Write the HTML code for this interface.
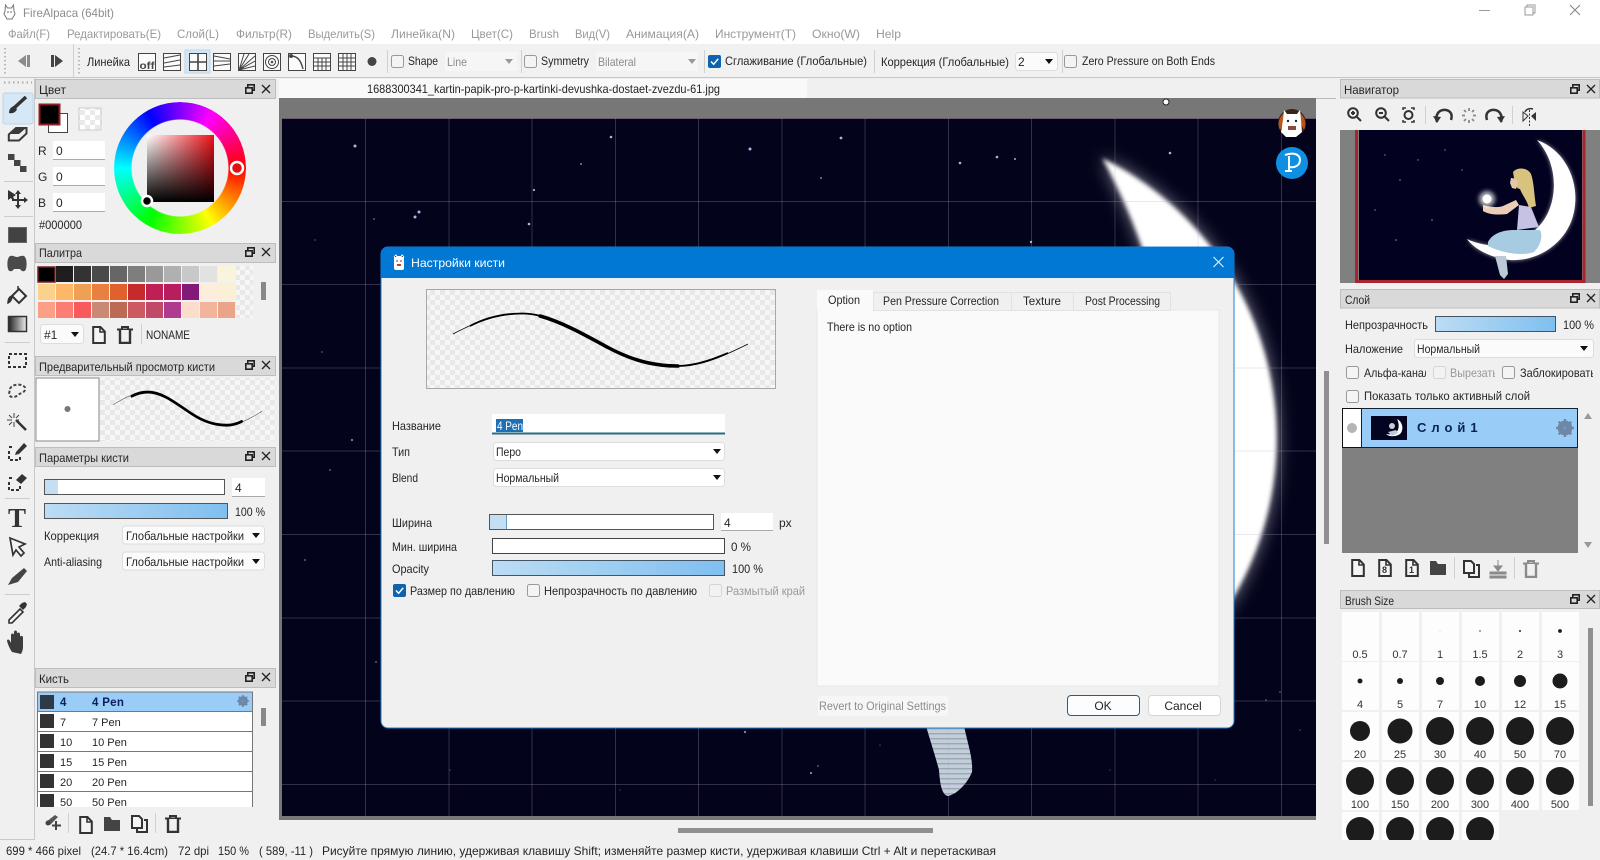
<!DOCTYPE html>
<html><head><meta charset="utf-8"><title>FireAlpaca</title>
<style>
html,body{margin:0;padding:0;background:#f0f0f0;width:1600px;height:860px;overflow:hidden}
svg{display:block}
text{font-family:"Liberation Sans","Noto Sans CJK SC",sans-serif;font-size:12px;fill:#252525}
.g{fill:#8c8c8c}.m{fill:#999}.w{fill:#fff}
.b{font-weight:bold;fill:#0a1f5c}
.l{font-size:11px;text-anchor:middle;fill:#333}
.h{fill:#d9d9d9;stroke:#bdbdbd}
.sep{stroke:#d0d0d0;stroke-width:1}
.row{fill:#fff;stroke:#777}
</style></head><body>
<svg width="1600" height="860" viewBox="0 0 1600 860" xmlns="http://www.w3.org/2000/svg">
<defs>
<pattern id="ck" width="10" height="10" patternUnits="userSpaceOnUse"><rect width="10" height="10" fill="#fff"/><rect width="5" height="5" fill="#e9e9e9"/><rect x="5" y="5" width="5" height="5" fill="#e9e9e9"/></pattern>
<pattern id="ckl" width="10" height="10" patternUnits="userSpaceOnUse"><rect width="10" height="10" fill="#f6f6f6"/><rect width="5" height="5" fill="#e8e8e8"/><rect x="5" y="5" width="5" height="5" fill="#e8e8e8"/></pattern>
<pattern id="legs" width="10" height="5" patternUnits="userSpaceOnUse"><rect width="10" height="5" fill="#c4ced8"/><rect y="3" width="10" height="1.4" fill="#98a8b6"/></pattern>
<linearGradient id="blue" x1="0" x2="1" y1="0" y2="0"><stop offset="0" stop-color="#bcdcf4"/><stop offset="1" stop-color="#7fbff0"/></linearGradient>
<linearGradient id="gr" x1="0" x2="1"><stop offset="0" stop-color="#222"/><stop offset="1" stop-color="#eee"/></linearGradient>
<linearGradient id="sqh" x1="0" x2="1"><stop offset="0" stop-color="#fff"/><stop offset="1" stop-color="#f01018"/></linearGradient>
<linearGradient id="sqv" x1="0" x2="0" y1="0" y2="1"><stop offset="0" stop-color="#000" stop-opacity="0"/><stop offset="1" stop-color="#000"/></linearGradient>
<filter id="bl" x="-20%" y="-20%" width="140%" height="140%"><feGaussianBlur stdDeviation="9"/></filter>
<filter id="bs" x="-30%" y="-30%" width="160%" height="160%"><feGaussianBlur stdDeviation="2"/></filter>
<symbol id="cb" viewBox="0 0 13 13" width="13" height="13"><rect x=".5" y=".5" width="12" height="12" rx="2" fill="#f4f4f4" stroke="#999"/></symbol>
<symbol id="cbd" viewBox="0 0 13 13" width="13" height="13"><rect x=".5" y=".5" width="12" height="12" rx="2" fill="#f2f2f2" stroke="#d5d5d5"/></symbol>
<symbol id="cbc" viewBox="0 0 13 13" width="13" height="13"><rect width="13" height="13" rx="2" fill="#0f62ae"/><path d="M3 6.5l2.6 2.8L10.2 3.8" fill="none" stroke="#fff" stroke-width="1.5"/></symbol>
<symbol id="win" viewBox="0 0 10 10" width="10" height="10"><rect x="2.8" y=".8" width="6.4" height="5.4" fill="none" stroke="#222" stroke-width="1.6"/><rect x=".8" y="3.8" width="6.4" height="5.4" fill="#d9d9d9" stroke="#222" stroke-width="1.6"/></symbol>
<symbol id="x" viewBox="0 0 10 10" width="10" height="10"><path d="M1 1l8 8M9 1L1 9" stroke="#222" stroke-width="1.3"/></symbol>
<symbol id="doc" viewBox="0 0 14 18" width="14" height="18"><path d="M1.2 1h7.3l4.3 4.5V17H1.2z" fill="#f4f4f4" stroke="#333" stroke-width="2"/><path d="M8 1v5h5" fill="none" stroke="#333" stroke-width="1.6"/></symbol>
<symbol id="fold" viewBox="0 0 16 14" width="16" height="14"><path d="M0 0h6l2 3h8v11H0z" fill="#444"/></symbol>
<symbol id="copy" viewBox="0 0 17 18" width="17" height="18"><path d="M1 1h7l3 3v9H1z" fill="#f4f4f4" stroke="#333" stroke-width="2"/><path d="M13 5h3v12H6v-3" fill="none" stroke="#333" stroke-width="2"/></symbol>
<symbol id="trash" viewBox="0 0 16 18" width="16" height="18"><path d="M0 3.5h16M5 3V1h6v2" fill="none" stroke="#333" stroke-width="2"/><path d="M3 4v13h10V4" fill="#f0f0f0" stroke="#333" stroke-width="2.4"/></symbol>
<symbol id="trg" viewBox="0 0 16 18" width="16" height="18"><path d="M0 3.5h16M5 3V1h6v2" fill="none" stroke="#8a8a8a" stroke-width="2"/><path d="M3 4v13h10V4" fill="#f0f0f0" stroke="#8a8a8a" stroke-width="2.4"/></symbol>
<symbol id="gear" viewBox="0 0 20 20" width="20" height="20"><circle cx="10" cy="10" r="6" fill="none" stroke="#6f87a6" stroke-width="4.4"/><path d="M10 0v20M0 10h20M3 3l14 14M17 3L3 17" stroke="#6f87a6" stroke-width="2.6"/><circle cx="10" cy="10" r="1.6" fill="#7f9ab8"/></symbol>
<path id="stroke" fill="none" d="M453,334 C477,321 500,313.500 522,313.500 C552,313.500 580,333 608,347.500 C636,362.500 658,366 678,366 C702,366 726,355 748,344"/>
<clipPath id="canv"><rect x="282" y="118" width="1034" height="698"/></clipPath>
<clipPath id="nav"><rect x="1359" y="130" width="223" height="150"/></clipPath>
<clipPath id="c1"><rect x="1364" y="365" width="62" height="16"/></clipPath>
<clipPath id="c2"><rect x="1450" y="365" width="45" height="16"/></clipPath>
<clipPath id="c3"><rect x="1520" y="365" width="73" height="16"/></clipPath>
<clipPath id="sz"><rect x="1340" y="610" width="245" height="230"/></clipPath>
<clipPath id="lst"><rect x="36" y="690" width="218" height="117"/></clipPath>
</defs>

<rect width="1600" height="860" fill="#f0f0f0"/>
<!-- Title + menu -->
<rect width="1600" height="44" fill="#fff"/>
<path d="M5.500 5l2 3h4l2-3 .5 6 1 3-3 5H7l-3-5 1-3z" fill="#fff" stroke="#777"/><circle cx="8" cy="12" r=".8" fill="#555"/><circle cx="11" cy="12" r=".8" fill="#555"/>
<text x="23" y="17" class="g" textLength="91" lengthAdjust="spacingAndGlyphs">FireAlpaca (64bit)</text>
<text x="8" y="38" class="m" textLength="42" lengthAdjust="spacingAndGlyphs">Файл(F)</text>
<text x="67" y="38" class="m" textLength="94" lengthAdjust="spacingAndGlyphs">Редактировать(E)</text>
<text x="177" y="38" class="m" textLength="42" lengthAdjust="spacingAndGlyphs">Слой(L)</text>
<text x="236" y="38" class="m" textLength="56" lengthAdjust="spacingAndGlyphs">Фильтр(R)</text>
<text x="308" y="38" class="m" textLength="67" lengthAdjust="spacingAndGlyphs">Выделить(S)</text>
<text x="391" y="38" class="m" textLength="64" lengthAdjust="spacingAndGlyphs">Линейка(N)</text>
<text x="471" y="38" class="m" textLength="42" lengthAdjust="spacingAndGlyphs">Цвет(C)</text>
<text x="529" y="38" class="m" textLength="30" lengthAdjust="spacingAndGlyphs">Brush</text>
<text x="575" y="38" class="m" textLength="35" lengthAdjust="spacingAndGlyphs">Вид(V)</text>
<text x="626" y="38" class="m" textLength="73" lengthAdjust="spacingAndGlyphs">Анимация(A)</text>
<text x="715" y="38" class="m" textLength="81" lengthAdjust="spacingAndGlyphs">Инструмент(T)</text>
<text x="812" y="38" class="m" textLength="48" lengthAdjust="spacingAndGlyphs">Окно(W)</text>
<text x="876" y="38" class="m" textLength="25" lengthAdjust="spacingAndGlyphs">Help</text>
<path d="M1479 10.500h11" stroke="#999"/>
<rect x="1525" y="7" width="8" height="8" fill="none" stroke="#999"/><path d="M1527 7V5h8v8h-2" fill="none" stroke="#999"/>
<path d="M1570 5l10 10M1580 5l-10 10" stroke="#888" stroke-width="1.1"/>

<!-- Toolbar -->
<rect y="44" width="1600" height="33" fill="#f1f1f1"/><path d="M0 77.500h1600" stroke="#c6c6c6"/>
<path d="M5 48v28M79 48v28" stroke="#bbb" stroke-width="2" stroke-dasharray="1.500 2.500"/>
<path d="M73.500 44v33" class="sep"/>
<path d="M18 61l8-6v12z M27 55h3v12h-3z" fill="#8b8b8b"/>
<path d="M51 55h3v12h-3z M55 55l8 6-8 6z" fill="#444"/>
<text x="87" y="66" textLength="43" lengthAdjust="spacingAndGlyphs">Линейка</text>
<rect x="185" y="50" width="25" height="23" fill="#d4e6f5" stroke="#bcd8ee"/>
<g fill="#fbfbfb" stroke="#444" stroke-width="1">
<rect x="138.500" y="53.500" width="17" height="17"/><rect x="163.500" y="53.500" width="17" height="17"/><rect x="189.500" y="53.500" width="17" height="17"/><rect x="213.500" y="53.500" width="17" height="17"/><rect x="238.500" y="53.500" width="17" height="17"/><rect x="263.500" y="53.500" width="17" height="17"/><rect x="288.500" y="53.500" width="17" height="17"/><rect x="313.500" y="53.500" width="17" height="17"/><rect x="338.500" y="53.500" width="17" height="17"/>
</g>
<text x="139.500" y="69" style="font-size:10px;font-weight:bold;fill:#444" textLength="15" lengthAdjust="spacingAndGlyphs">off</text>
<g stroke="#444" fill="none">
<path d="M164 58l16-3M164 63l16-3M164 67l16-2"/>
<path d="M198 54v16M190 62h16" stroke-width="1.6"/>
<path d="M214 56l16 3M214 61h16M214 66l16-2"/>
<path d="M239 70l16-14M239 70l16-9M239 70l16-4M239 70l10-16M239 70l5-16"/>
<circle cx="272" cy="62" r="6.500"/><circle cx="272" cy="62" r="3.500"/><circle cx="272" cy="62" r=".8"/>
<path d="M291 56c7 0 10 5 12 13" stroke-width="1.400"/><circle cx="291" cy="56" r="1.500" fill="#444"/>
<path d="M314 58h16M314 62h16M314 66h16M318 58v12M322 58v12M326 58v12"/>
<path d="M339 58h16M339 62h16M339 66h16M343 54v16M347 54v16M351 54v16"/>
</g>
<circle cx="372" cy="61.500" r="4.500" fill="#444"/>
<path d="M387.500 50v23M521.500 50v23M704.500 50v23M874.500 50v23M1062.500 50v23" class="sep"/>
<use href="#cb" x="391" y="55"/><text x="408" y="65" textLength="30" lengthAdjust="spacingAndGlyphs">Shape</text>
<rect x="445" y="52" width="72" height="19" fill="#f6f6f6"/><text x="447" y="66" class="g" textLength="20" lengthAdjust="spacingAndGlyphs">Line</text><path d="M505 59h8l-4 5z" fill="#999"/>
<use href="#cb" x="524" y="55"/><text x="541" y="65" textLength="48" lengthAdjust="spacingAndGlyphs">Symmetry</text>
<rect x="596" y="52" width="102" height="19" fill="#f6f6f6"/><text x="598" y="66" class="g" textLength="38" lengthAdjust="spacingAndGlyphs">Bilateral</text><path d="M688 59h8l-4 5z" fill="#999"/>
<use href="#cbc" x="708" y="55"/><text x="725" y="65" textLength="142" lengthAdjust="spacingAndGlyphs">Сглаживание (Глобальные)</text>
<text x="881" y="66" textLength="128" lengthAdjust="spacingAndGlyphs">Коррекция (Глобальные)</text>
<rect x="1015.500" y="52.500" width="42" height="18" rx="3" fill="#fbfbfb" stroke="#ddd"/><text x="1018" y="66">2</text><path d="M1045 59h8l-4 5z" fill="#111"/>
<use href="#cb" x="1064" y="55"/><text x="1082" y="65" textLength="133" lengthAdjust="spacingAndGlyphs">Zero Pressure on Both Ends</text>

<!-- Tab bar -->
<rect x="279" y="79" width="528" height="19" fill="#f9f9f9"/>
<text x="367" y="93" textLength="353" lengthAdjust="spacingAndGlyphs">1688300341_kartin-papik-pro-p-kartinki-devushka-dostaet-zvezdu-61.jpg</text>

<!-- Canvas -->
<rect x="279" y="98" width="1037" height="722" fill="#777"/>
<path d="M1316 98.500h20" stroke="#bbb"/>
<rect x="282" y="118" width="1034" height="698" fill="#03031c"/>
<g clip-path="url(#canv)">
<g fill="#aeb2e6">
<circle cx="355" cy="146" r="1.500"/><circle cx="419" cy="212" r="1.500"/><circle cx="415" cy="217" r="1.500"/><circle cx="534" cy="190" r="1.100"/><circle cx="529" cy="224" r="1.300"/><circle cx="374" cy="219" r="1" opacity=".5"/><circle cx="611" cy="137" r="1.300"/><circle cx="750" cy="149" r="1.500"/><circle cx="841" cy="138" r="1.400"/><circle cx="821" cy="178" r="1" opacity=".7"/><circle cx="581" cy="164" r="1" opacity=".7"/><circle cx="960" cy="163" r="1.300"/><circle cx="997" cy="157" r="1.300"/><circle cx="1015" cy="159" r="1.100" opacity=".8"/><circle cx="1170" cy="153" r="1.300"/><circle cx="1031" cy="242" r="1.200"/><circle cx="818" cy="766" r=".9" opacity=".6"/><circle cx="811" cy="773" r="1.100" opacity=".8"/><circle cx="1266" cy="700" r=".9" opacity=".5"/><circle cx="1280" cy="692" r=".9" opacity=".5"/><circle cx="745" cy="732" r="1.200" opacity=".7"/><circle cx="376" cy="662" r="1" opacity=".5"/><circle cx="330" cy="470" r="1" opacity=".5"/><circle cx="305" cy="560" r="1" opacity=".5"/><circle cx="352" cy="440" r="1.100" opacity=".7"/><circle cx="322" cy="352" r=".9" opacity=".5"/><circle cx="315" cy="240" r=".9" opacity=".4"/><circle cx="450" cy="770" r=".8" opacity=".4"/><circle cx="620" cy="790" r=".8" opacity=".35"/><circle cx="1110" cy="770" r=".8" opacity=".35"/><circle cx="1215" cy="780" r=".8" opacity=".3"/><circle cx="880" cy="745" r=".8" opacity=".35"/><circle cx="1300" cy="730" r=".9" opacity=".35"/>
</g>
<path fill="#fff" opacity=".55" filter="url(#bl)" d="M1102,158 A313,313 0 0 1 1150,690 C1200,610 1215,360 1102,158Z"/>
<path fill="#fff" filter="url(#bs)" d="M1102,158 A313,313 0 0 1 1150,690 C1200,610 1205,340 1102,158Z"/>
<path fill="url(#legs)" d="M926,726 L964,726 C968,745 973,758 972,772 C968,782 958,794 948,796 C942,795 940,785 939,770 C935,755 930,740 926,726Z"/>
<g stroke="#b6a8c2" stroke-opacity=".27" stroke-width="1">
<path d="M365.500 118v698M449 118v698M532 118v698M615.500 118v698M698.500 118v698M782 118v698M865 118v698M948.500 118v698M1031.500 118v698M1115 118v698M1198 118v698M1281.500 118v698"/>
<path d="M282 201.500h1034M282 284.500h1034M282 368h1034M282 451h1034M282 534.500h1034M282 618h1034M282 701h1034M282 784.500h1034"/>
</g>
<path d="M282 118.500h1034" stroke="#b48aa6" stroke-opacity=".6"/>
</g>
<circle cx="1166" cy="102" r="3" fill="#fff" stroke="#222"/>
<circle cx="1292" cy="123" r="14" fill="#3a2216"/><path d="M1280 130a14 14 0 0 1 4-17l2 5z" fill="#b8561e"/><path d="M1304 130a14 14 0 0 0-4-17l-2 5z" fill="#b8561e"/>
<path d="M1284 110l3 4h10l3-4 1 10 1 12-6 5h-10l-5-5 2-12z" fill="#fff"/><circle cx="1288" cy="121" r="1.200" fill="#222"/><circle cx="1296" cy="121" r="1.200" fill="#222"/><rect x="1288" y="126" width="8" height="4" fill="#8a4a3a"/>
<circle cx="1292" cy="163" r="16" fill="#0f8fe2"/>
<path d="M1285 155c8-3 15-1 15 5s-6 8-11 7M1289 156v15M1285 171h7" fill="none" stroke="#fff" stroke-width="2"/>

<!-- Left tools -->
<path d="M34.500 78v761M0 839.500h35" stroke="#c8c8c8"/>
<path d="M4 82.500h28" stroke="#aaa" stroke-width="2" stroke-dasharray="1.500 3"/>
<rect x="3" y="93" width="30" height="31" rx="2" fill="#d6e8f6" stroke="#b7d6ee"/>
<path d="M14 108L26 97" stroke="#333" stroke-width="3.500"/><path d="M9 113c0-4 2-6 5-7l3 3c-1 3-4 5-8 4z" fill="#333"/>
<path d="M8.800 134.500L16 128h10.500v5.500L19 140.500H8.800z" fill="#f0f0f0" stroke="#3a3a3a" stroke-width="2"/><path d="M9 134h10l7-6H16z" fill="#3a3a3a"/>
<path d="M8 154h6.500v6H8zM14 160h6.500v6H14zM20 166h6.500v6H20z" fill="#444"/>
<path d="M8 190l8 5-3 2 2 3-2 1-2-3-3 2z" fill="#333"/><path d="M18 193v13M12 200h14" stroke="#333" stroke-width="2"/><path d="M18 190l3 4h-6zM18 209l3-4h-6zM28 200l-4-3v6z" fill="#333"/>
<path d="M4 181.500h29M4 216.500h29" stroke="#ccc"/>
<rect x="8.500" y="227.500" width="18" height="15" fill="#424242" stroke="#666"/>
<path d="M10 256c3-1 5 1 7 1s4-2 7-1c3 2 3 9 2 13-1 3-4 3-6 0h-6c-2 3-5 3-6 0-1-4-1-11 2-13z" fill="#4a4a4a"/>
<path d="M12 296l7-7 7 7-7 7z" fill="#f3f3f3" stroke="#333" stroke-width="2"/><path d="M18 289v-3M12 296c-3 1-4 4-4 7 2-1 4-3 4-7z" fill="#333" stroke="#333" stroke-width="1.500"/>
<rect x="8.500" y="316.500" width="18" height="15" fill="url(#gr)" stroke="#333" stroke-width="1.500"/>
<path d="M5 342.500h25" stroke="#ccc"/>
<rect x="9" y="354" width="17" height="13" fill="none" stroke="#333" stroke-width="2" stroke-dasharray="3 2"/>
<path d="M10 389c1-4 8-5 11-4s5 2 4 5-5 3-7 5-6 3-8 1 0-5 0-7z" fill="none" stroke="#444" stroke-width="2" stroke-dasharray="3 2"/>
<path d="M16 420l10 10" stroke="#333" stroke-width="2.500"/><path d="M14 413v5M14 422v5M7 420h5M16 420h3M9 415l3 3M9 425l3-3M19 415l-3 3" stroke="#444"/>
<path d="M9 447h5M9 451v9h11v-4" fill="none" stroke="#333" stroke-width="2" stroke-dasharray="3 2"/><path d="M16 452l8-9 3 3-8 8-4 1z" fill="#333"/>
<path d="M9 478h5M9 482v8h11v-4" fill="none" stroke="#333" stroke-width="2" stroke-dasharray="3 2"/><path d="M16 480l6-6 5 4-6 6z" fill="#333"/>
<path d="M5 498.500h25" stroke="#ccc"/>
<text x="17" y="527" text-anchor="middle" style="font-family:'Liberation Serif',serif;font-size:27px;font-weight:bold;fill:#333">T</text>
<path d="M10 538l15 6-6 3 5 6-3 3-5-6-3 5z" fill="#f4f4f4" stroke="#333" stroke-width="1.700"/>
<path d="M8 585l4-7 12-10 3 3-9 11z" fill="#444"/>
<path d="M5 594.500h25" stroke="#ccc"/>
<path d="M9 620l11-11 3 3-11 11h-3z" fill="#f2f2f2" stroke="#333" stroke-width="1.600"/><path d="M19 606l3-3 3-1 2 2-1 3-3 3z" fill="#333"/>
<path d="M12 652c-2-3-4-7-5-11 0-2 2-2 3 0l1 2v-8c0-2 3-2 3 0v-3c0-2 3-2 3 0v3-1c0-2 3-2 3 0v3c0-2 3-1 3 0v10c0 3-1 5-2 7z" fill="#3c3c3c"/>

<!-- Color panel -->
<rect class="h" x="35.500" y="79.500" width="240" height="19"/>
<text x="39" y="94" textLength="27" lengthAdjust="spacingAndGlyphs">Цвет</text><use href="#win" x="245" y="84"/><use href="#x" x="261" y="84"/>
<rect x="48.500" y="113.500" width="19" height="19" fill="#fff" stroke="#444"/>
<rect x="39.500" y="104.500" width="20" height="20" fill="#000" stroke="#8f1d24" stroke-width="2"/>
<rect x="79" y="108" width="22" height="22" fill="url(#ck)" stroke="#ccc"/>
<text x="38" y="155">R</text><rect x="53" y="141" width="52" height="19" fill="#fff"/><path d="M53 159.500h52" stroke="#aaa"/><text x="56" y="155">0</text>
<text x="38" y="181">G</text><rect x="53" y="167" width="52" height="19" fill="#fff"/><path d="M53 185.500h52" stroke="#aaa"/><text x="56" y="181">0</text>
<text x="38" y="207">B</text><rect x="53" y="193" width="52" height="19" fill="#fff"/><path d="M53 211.500h52" stroke="#aaa"/><text x="56" y="207">0</text>
<text x="39" y="229" textLength="43" lengthAdjust="spacingAndGlyphs">#000000</text>
<foreignObject x="114" y="102" width="132" height="132"><div xmlns="http://www.w3.org/1999/xhtml" style="width:132px;height:132px;border-radius:50%;background:conic-gradient(from 90deg,#f00 0deg,#ff0 60deg,#0f0 120deg,#0ff 180deg,#00f 240deg,#f0f 300deg,#f00 360deg);-webkit-mask:radial-gradient(circle,transparent 48px,#000 49px);mask:radial-gradient(circle,transparent 48px,#000 49px)"></div></foreignObject>
<rect x="147" y="135" width="67" height="67" fill="url(#sqh)"/><rect x="147" y="135" width="67" height="67" fill="url(#sqv)"/>
<circle cx="237" cy="168" r="6" fill="#e01010" stroke="#fff" stroke-width="2.500"/>
<circle cx="147" cy="201" r="5" fill="#000" stroke="#fff" stroke-width="2.500"/>

<!-- Palette -->
<rect class="h" x="35.500" y="243.500" width="240" height="19"/>
<text x="39" y="257" textLength="43" lengthAdjust="spacingAndGlyphs">Палитра</text><use href="#win" x="245" y="247"/><use href="#x" x="261" y="247"/>
<rect x="38" y="267" width="17" height="15" fill="#000" stroke="#7c1e20" stroke-width="1.500"/>
<g>
<rect x="56" y="266" width="17" height="16" fill="#1e1e1e"/><rect x="74" y="266" width="17" height="16" fill="#333"/><rect x="92" y="266" width="17" height="16" fill="#4a4a4a"/><rect x="110" y="266" width="17" height="16" fill="#666"/><rect x="128" y="266" width="17" height="16" fill="#7e7e7e"/><rect x="146" y="266" width="17" height="16" fill="#999"/><rect x="164" y="266" width="17" height="16" fill="#b0b0b0"/><rect x="182" y="266" width="17" height="16" fill="#c8c8c8"/><rect x="200" y="266" width="17" height="16" fill="#e2e2e2"/><rect x="218" y="266" width="17" height="16" fill="#fbf4dc"/><rect x="236" y="266" width="17" height="52" fill="url(#ckl)"/>
<rect x="38" y="284" width="17" height="16" fill="#fbd28c"/><rect x="56" y="284" width="17" height="16" fill="#fcb768"/><rect x="74" y="284" width="17" height="16" fill="#f0a055"/><rect x="92" y="284" width="17" height="16" fill="#e88040"/><rect x="110" y="284" width="17" height="16" fill="#e0602e"/><rect x="128" y="284" width="17" height="16" fill="#c62a2a"/><rect x="146" y="284" width="17" height="16" fill="#be2054"/><rect x="164" y="284" width="17" height="16" fill="#b81e5e"/><rect x="182" y="284" width="17" height="16" fill="#841a78"/><rect x="200" y="284" width="17" height="16" fill="#fdeedb"/><rect x="218" y="284" width="17" height="16" fill="#fbf0d6"/>
<rect x="38" y="302" width="17" height="16" fill="#fb9f86"/><rect x="56" y="302" width="17" height="16" fill="#fa7e74"/><rect x="74" y="302" width="17" height="16" fill="#f85a5e"/><rect x="92" y="302" width="17" height="16" fill="#c88a74"/><rect x="110" y="302" width="17" height="16" fill="#bc6a54"/><rect x="128" y="302" width="17" height="16" fill="#cc5a60"/><rect x="146" y="302" width="17" height="16" fill="#c04a68"/><rect x="164" y="302" width="17" height="16" fill="#b03a8e"/><rect x="182" y="302" width="17" height="16" fill="#fcdccb"/><rect x="200" y="302" width="17" height="16" fill="#f2b49a"/><rect x="218" y="302" width="17" height="16" fill="#eca488"/>
</g>
<rect x="261" y="282" width="5" height="18" fill="#888"/>
<rect x="40.500" y="324.500" width="43" height="19" rx="3" fill="#fbfbfb" stroke="#ddd"/><text x="44" y="339">#1</text><path d="M71 332h8l-4 5z" fill="#111"/>
<use href="#doc" x="92" y="326"/><use href="#trash" x="117" y="326"/>
<path d="M141.500 324v20" class="sep"/>
<text x="146" y="339" textLength="44" lengthAdjust="spacingAndGlyphs">NONAME</text>

<!-- Brush preview -->
<rect class="h" x="35.500" y="356.500" width="240" height="19"/>
<text x="39" y="371" textLength="176" lengthAdjust="spacingAndGlyphs">Предварительный просмотр кисти</text><use href="#win" x="245" y="360"/><use href="#x" x="261" y="360"/>
<rect x="100" y="378" width="176" height="63" fill="url(#ckl)"/>
<rect x="36" y="378" width="63" height="63" fill="#fff" stroke="#888"/>
<circle cx="67.500" cy="409" r="3" fill="#777"/>
<g transform="translate(113,405) scale(.505,.63) translate(-453,-334)" stroke="#000"><use href="#stroke" stroke-width="1" stroke-opacity=".6"/><path fill="none" stroke-width="4.500" stroke-linecap="round" d="M490 320C502 315 512 313.500 522 313.500 552 313.500 580 333 608 347.500 636 362.500 658 366 678 366 688 366 698 364 708 360"/></g>

<!-- Brush params -->
<rect class="h" x="35.500" y="447.500" width="240" height="19"/>
<text x="39" y="462" textLength="90" lengthAdjust="spacingAndGlyphs">Параметры кисти</text><use href="#win" x="245" y="451"/><use href="#x" x="261" y="451"/>
<rect x="44.500" y="479.500" width="180" height="15" fill="#fff" stroke="#555"/><rect x="45" y="480" width="13" height="14" fill="#c4dff3"/>
<rect x="232" y="478" width="33" height="19" fill="#fff"/><path d="M232 496.500h33" stroke="#aaa"/><text x="235" y="492">4</text>
<rect x="44.500" y="503.500" width="183" height="15" fill="url(#blue)" stroke="#555"/>
<text x="235" y="516" textLength="30" lengthAdjust="spacingAndGlyphs">100 %</text>
<text x="44" y="540" textLength="55" lengthAdjust="spacingAndGlyphs">Коррекция</text>
<rect x="122.500" y="526" width="142" height="18" rx="3" fill="#fbfbfb" stroke="#ddd"/><text x="126" y="540" textLength="118" lengthAdjust="spacingAndGlyphs">Глобальные настройки</text><path d="M252 533h8l-4 5z" fill="#111"/>
<text x="44" y="566" textLength="58" lengthAdjust="spacingAndGlyphs">Anti-aliasing</text>
<rect x="122.500" y="552" width="142" height="18" rx="3" fill="#fbfbfb" stroke="#ddd"/><text x="126" y="566" textLength="118" lengthAdjust="spacingAndGlyphs">Глобальные настройки</text><path d="M252 559h8l-4 5z" fill="#111"/>

<!-- Brush list -->
<rect class="h" x="35.500" y="668.500" width="240" height="19"/>
<text x="39" y="683" textLength="30" lengthAdjust="spacingAndGlyphs">Кисть</text><use href="#win" x="245" y="672"/><use href="#x" x="261" y="672"/>
<g clip-path="url(#lst)">
<rect x="37.500" y="692" width="215" height="19.500" fill="#99ccf6" stroke="#777"/>
<rect x="37.500" y="711.500" width="215" height="20" class="row"/><rect x="37.500" y="731.500" width="215" height="20" class="row"/><rect x="37.500" y="751.500" width="215" height="20" class="row"/><rect x="37.500" y="771.500" width="215" height="20" class="row"/><rect x="37.500" y="791.500" width="215" height="20" class="row"/>
<rect x="40" y="695" width="14" height="14" fill="#2e3a48"/><rect x="40" y="714" width="14" height="14" fill="#333"/><rect x="40" y="734" width="14" height="14" fill="#333"/><rect x="40" y="754" width="14" height="14" fill="#333"/><rect x="40" y="774" width="14" height="14" fill="#333"/><rect x="40" y="794" width="14" height="14" fill="#333"/>
<text x="60" y="706" class="b" style="font-size:11.500px">4</text><text x="92" y="706" class="b" style="font-size:11.500px;letter-spacing:.3px">4 Pen</text>
<text x="60" y="726" style="font-size:11px">7</text><text x="92" y="726" style="font-size:11px">7 Pen</text>
<text x="60" y="746" style="font-size:11px">10</text><text x="92" y="746" style="font-size:11px">10 Pen</text>
<text x="60" y="766" style="font-size:11px">15</text><text x="92" y="766" style="font-size:11px">15 Pen</text>
<text x="60" y="786" style="font-size:11px">20</text><text x="92" y="786" style="font-size:11px">20 Pen</text>
<text x="60" y="806" style="font-size:11px">50</text><text x="92" y="806" style="font-size:11px">50 Pen</text>
</g>
<use href="#gear" x="237" y="695" width="12" height="12"/>
<rect x="261" y="708" width="5" height="18" fill="#888"/>
<path d="M46 822l9-7 3 2-8 8z" fill="#555"/><circle cx="48" cy="823" r="2.500" fill="#444"/><path d="M56 821v9M52 825.500h9" stroke="#444" stroke-width="2"/>
<path d="M68.500 813v20M155.500 813v20" class="sep"/>
<use href="#doc" x="79" y="816"/><use href="#fold" x="104" y="817"/><use href="#copy" x="131" y="815"/><use href="#trash" x="165" y="815"/>

<!-- Status -->
<text x="6" y="855" textLength="75" lengthAdjust="spacingAndGlyphs">699 * 466 pixel</text>
<text x="91" y="855" textLength="77" lengthAdjust="spacingAndGlyphs">(24.7 * 16.4cm)</text>
<text x="178" y="855" textLength="31" lengthAdjust="spacingAndGlyphs">72 dpi</text>
<text x="218" y="855" textLength="31" lengthAdjust="spacingAndGlyphs">150 %</text>
<text x="259" y="855" textLength="54" lengthAdjust="spacingAndGlyphs">( 589, -11 )</text>
<text x="322" y="855" textLength="674" lengthAdjust="spacingAndGlyphs">Рисуйте прямую линию, удерживая клавишу Shift; изменяйте размер кисти, удерживая клавиши Ctrl + Alt и перетаскивая</text>

<!-- Canvas scrollbars -->
<rect x="678" y="828" width="255" height="5" fill="#8f8f8f"/>
<rect x="1324" y="371" width="5" height="173" fill="#8f8f8f"/>

<!-- Navigator -->
<rect class="h" x="1340.500" y="79.500" width="259" height="18.500"/>
<text x="1344" y="94" textLength="55" lengthAdjust="spacingAndGlyphs">Навигатор</text><use href="#win" x="1570" y="84"/><use href="#x" x="1586" y="84"/>
<g fill="none" stroke="#333" stroke-width="2">
<circle cx="1353" cy="113" r="4.800"/><path d="M1357 117l4 4M1351 113h4M1353 111v4"/>
<circle cx="1381" cy="113" r="4.800"/><path d="M1385 117l4 4M1379 113h4"/>
<circle cx="1408.500" cy="115" r="4"/><path d="M1403 110v-2h3M1411 108h3v2M1403 120v2h3M1414 120v2h-3" stroke-width="1.500"/>
<path d="M1437 122c-1-4-1-6 1-9 3-4 9-4 12-1 2 2 2 5 1 8" stroke-width="2.500"/>
<path d="M1501 122c1-4 1-6-1-9-3-4-9-4-12-1-2 2-2 5-1 8" stroke-width="2.500"/>
</g>
<path d="M1433 116l8 1-4 6z" fill="#333"/><path d="M1505 116l-8 1 4 6z" fill="#333"/>
<g stroke="#888" stroke-width="1.800"><path d="M1469 108v3M1469 120v3M1462 115.500h3M1473 115.500h3M1464 110l2 2M1472 119l2 2M1474 110l-2 2M1466 119l-2 2"/></g>
<path d="M1425.500 106v18M1512.500 106v18" class="sep"/>
<path d="M1523 112l5 4-5 5z" fill="none" stroke="#333"/><path d="M1536 112l-5 4 5 5z" fill="#333"/><path d="M1529.500 110v16" stroke="#333" stroke-dasharray="2 1.500"/><path d="M1525 112c1-3 5-4 8-3" fill="none" stroke="#333" stroke-width="1.500"/>
<rect x="1340" y="130" width="260" height="153" fill="#808080"/>
<rect x="1359" y="130" width="223" height="150" fill="#020220"/>
<g clip-path="url(#nav)">
<path fill="#fff" opacity=".6" filter="url(#bs)" d="M1537,140 C1565,150 1578,180 1575,205 C1572,240 1540,262 1510,260 C1492,258 1475,250 1467,239 C1490,250 1520,248 1540,225 C1558,205 1560,165 1537,140 Z"/>
<path fill="#fff" d="M1537,140 C1565,150 1578,180 1575,205 C1572,240 1540,262 1510,260 C1492,258 1475,250 1467,239 C1490,250 1520,248 1540,225 C1558,205 1560,165 1537,140 Z"/>
<path d="M1513 172c4-5 14-5 18 2 3 8 3 20 5 32l-7 2c-2-8-7-13-9-19-2 0-4-2-5-5z" fill="#d8c27e"/>
<path d="M1511 178c2 0 6 1 7 5l-2 6-4-1-2-5z" fill="#e6c6aa"/>
<path d="M1519 205l12 2 8 20-22 3z" fill="#c5c2e4"/>
<path d="M1488 242c4-8 14-12 26-12l26 0c3 6 1 15-6 22-10 4-30 2-46-6z" fill="#a7cbe0"/>
<path d="M1483 205c8 2 14 3 20 1l13-6 3 5-12 9c-8 1-18 1-24-3z" fill="#ecccb4"/>
<path d="M1495 256l11 0 2 18-4 5-4-4z" fill="#bccad8"/>
<circle cx="1487" cy="199" r="8" fill="#fff" opacity=".7" filter="url(#bs)"/><circle cx="1487" cy="199" r="4.500" fill="#fff"/>
<g fill="#8a8ab0"><circle cx="1385" cy="155" r=".7"/><circle cx="1400" cy="180" r=".7"/><circle cx="1418" cy="160" r=".7"/><circle cx="1396" cy="240" r=".8"/><circle cx="1445" cy="150" r=".7"/><circle cx="1432" cy="220" r=".8"/><circle cx="1375" cy="210" r=".7"/><circle cx="1462" cy="170" r=".7"/></g>
</g>
<path d="M1356.500 130v151.500h227.500V130" fill="none" stroke="#aa2430" stroke-width="3"/>

<!-- Layer -->
<rect class="h" x="1340.500" y="289.500" width="259" height="18.500"/>
<text x="1345" y="304" textLength="25" lengthAdjust="spacingAndGlyphs">Слой</text><use href="#win" x="1570" y="293"/><use href="#x" x="1586" y="293"/>
<text x="1345" y="329" textLength="83" lengthAdjust="spacingAndGlyphs">Непрозрачность</text>
<rect x="1435.500" y="316.500" width="120" height="15" fill="url(#blue)" stroke="#456"/>
<text x="1563" y="329" textLength="31" lengthAdjust="spacingAndGlyphs">100 %</text>
<text x="1345" y="353" textLength="58" lengthAdjust="spacingAndGlyphs">Наложение</text>
<rect x="1414.500" y="339.500" width="179" height="18" rx="3" fill="#fbfbfb" stroke="#ddd"/><text x="1417" y="353" textLength="63" lengthAdjust="spacingAndGlyphs">Нормальный</text><path d="M1580 346h8l-4 5z" fill="#111"/>
<use href="#cb" x="1346" y="366"/>
<text x="1364" y="377" clip-path="url(#c1)" textLength="66" lengthAdjust="spacingAndGlyphs">Альфа-канал</text>
<use href="#cbd" x="1433" y="366"/>
<text x="1450" y="377" class="m" clip-path="url(#c2)" textLength="48" lengthAdjust="spacingAndGlyphs">Вырезать</text>
<use href="#cb" x="1502" y="366"/>
<text x="1520" y="377" clip-path="url(#c3)" textLength="76" lengthAdjust="spacingAndGlyphs">Заблокировать</text>
<use href="#cb" x="1346" y="390"/>
<text x="1364" y="400" textLength="166" lengthAdjust="spacingAndGlyphs">Показать только активный слой</text>
<rect x="1342" y="408" width="236" height="145" fill="#808080"/>
<rect x="1342.500" y="408.500" width="19" height="39" fill="#fff" stroke="#111"/>
<rect x="1361.500" y="408.500" width="216" height="39" fill="#99ccf6" stroke="#123"/>
<circle cx="1352" cy="428" r="5" fill="#b4b4b4"/>
<rect x="1371" y="416" width="36" height="24" fill="#030322"/>
<path d="M1397 419c6 3 7 11 3 15-4 3-11 3-14 0 5 1 9 0 12-4 1-4 1-7-1-11z" fill="#fff"/><circle cx="1392" cy="426" r="3" fill="#ccc"/><path d="M1388 432l8-2 2 3-6 3z" fill="#bcd"/>
<text x="1417" y="432" class="b" style="font-size:13px;letter-spacing:5px">Слой1</text>
<use href="#gear" x="1556" y="419" width="18" height="18"/>
<path d="M1588 413l-4 6h8z" fill="#999"/><path d="M1584 542h8l-4 6z" fill="#999"/>
<use href="#doc" x="1351" y="559"/>
<use href="#doc" x="1378" y="559"/><text x="1384.500" y="573" text-anchor="middle" style="font-size:9px;font-weight:bold;fill:#333">8</text>
<use href="#doc" x="1405" y="559"/><text x="1411.500" y="573" text-anchor="middle" style="font-size:9px;font-weight:bold;fill:#333">1</text>
<use href="#fold" x="1430" y="561"/>
<path d="M1454.500 557v22M1514.500 557v22" class="sep"/>
<use href="#copy" x="1463" y="560"/>
<path d="M1498 560v8M1494 566l4 5 4-5z M1490 572h16v2h-16z M1490 576h16v2h-16z" fill="#8a8a8a" stroke="#8a8a8a"/>
<use href="#trg" x="1523" y="560"/>

<!-- Brush Size -->
<rect class="h" x="1340.500" y="590.500" width="259" height="18"/>
<text x="1345" y="605" textLength="49" lengthAdjust="spacingAndGlyphs">Brush Size</text><use href="#win" x="1570" y="594"/><use href="#x" x="1586" y="594"/>
<g clip-path="url(#sz)">
<g fill="#fdfdfd">
<rect x="1342" y="612" width="37" height="49"/><rect x="1382" y="612" width="37" height="49"/><rect x="1422" y="612" width="37" height="49"/><rect x="1462" y="612" width="37" height="49"/><rect x="1502" y="612" width="37" height="49"/><rect x="1542" y="612" width="37" height="49"/>
<rect x="1342" y="662" width="37" height="48"/><rect x="1382" y="662" width="37" height="48"/><rect x="1422" y="662" width="37" height="48"/><rect x="1462" y="662" width="37" height="48"/><rect x="1502" y="662" width="37" height="48"/><rect x="1542" y="662" width="37" height="48"/>
<rect x="1342" y="712" width="37" height="48"/><rect x="1382" y="712" width="37" height="48"/><rect x="1422" y="712" width="37" height="48"/><rect x="1462" y="712" width="37" height="48"/><rect x="1502" y="712" width="37" height="48"/><rect x="1542" y="712" width="37" height="48"/>
<rect x="1342" y="762" width="37" height="48"/><rect x="1382" y="762" width="37" height="48"/><rect x="1422" y="762" width="37" height="48"/><rect x="1462" y="762" width="37" height="48"/><rect x="1502" y="762" width="37" height="48"/><rect x="1542" y="762" width="37" height="48"/>
<rect x="1342" y="812" width="37" height="28"/><rect x="1382" y="812" width="37" height="28"/><rect x="1422" y="812" width="37" height="28"/><rect x="1462" y="812" width="37" height="28"/>
</g>
<g fill="#1c1c1c">
<circle cx="1440" cy="631" r=".5" opacity=".25"/><circle cx="1480" cy="631" r="1" opacity=".5"/><circle cx="1520" cy="631" r="1.100" opacity=".8"/><circle cx="1560" cy="631" r="1.900"/>
<circle cx="1360" cy="681" r="2.500"/><circle cx="1400" cy="681" r="3"/><circle cx="1440" cy="681" r="4"/><circle cx="1480" cy="681" r="5"/><circle cx="1520" cy="681" r="6"/><circle cx="1560" cy="681" r="7.500"/>
<circle cx="1360" cy="731" r="10"/><circle cx="1400" cy="731" r="12.500"/><circle cx="1440" cy="731" r="14"/><circle cx="1480" cy="731" r="14"/><circle cx="1520" cy="731" r="14"/><circle cx="1560" cy="731" r="14"/>
<circle cx="1360" cy="781" r="14"/><circle cx="1400" cy="781" r="14"/><circle cx="1440" cy="781" r="14"/><circle cx="1480" cy="781" r="14"/><circle cx="1520" cy="781" r="14"/><circle cx="1560" cy="781" r="14"/>
<circle cx="1360" cy="831" r="14"/><circle cx="1400" cy="831" r="14"/><circle cx="1440" cy="831" r="14"/><circle cx="1480" cy="831" r="14"/>
</g>
<text class="l" x="1360" y="658">0.5</text><text class="l" x="1400" y="658">0.7</text><text class="l" x="1440" y="658">1</text><text class="l" x="1480" y="658">1.5</text><text class="l" x="1520" y="658">2</text><text class="l" x="1560" y="658">3</text>
<text class="l" x="1360" y="708">4</text><text class="l" x="1400" y="708">5</text><text class="l" x="1440" y="708">7</text><text class="l" x="1480" y="708">10</text><text class="l" x="1520" y="708">12</text><text class="l" x="1560" y="708">15</text>
<text class="l" x="1360" y="758">20</text><text class="l" x="1400" y="758">25</text><text class="l" x="1440" y="758">30</text><text class="l" x="1480" y="758">40</text><text class="l" x="1520" y="758">50</text><text class="l" x="1560" y="758">70</text>
<text class="l" x="1360" y="808">100</text><text class="l" x="1400" y="808">150</text><text class="l" x="1440" y="808">200</text><text class="l" x="1480" y="808">300</text><text class="l" x="1520" y="808">400</text><text class="l" x="1560" y="808">500</text>
</g>
<rect x="1588" y="628" width="5" height="178" fill="#8f8f8f"/>

<!-- Dialog -->
<rect x="381" y="247" width="853" height="481" rx="7" fill="#f0f0f0" stroke="#1681d6"/>
<path d="M381 278v-24a7 7 0 0 1 7-7h839a7 7 0 0 1 7 7v24z" fill="#0078d4"/>
<rect x="394" y="256" width="10" height="14" rx="2" fill="#fff"/><path d="M394 257l2-2 1 2M404 257l-2-2-1 2" stroke="#fff"/><circle cx="397" cy="261" r=".8" fill="#333"/><circle cx="401" cy="261" r=".8" fill="#333"/><rect x="397" y="264" width="4" height="2" fill="#c33"/>
<text x="411" y="267" class="w" textLength="94" lengthAdjust="spacingAndGlyphs">Настройки кисти</text>
<path d="M1213.500 257l10 10M1223.500 257l-10 10" stroke="#e6f3fc" stroke-width="1.100"/>
<rect x="426.500" y="289.500" width="349" height="99" fill="url(#ckl)" stroke="#a8a8a8"/>
<g stroke="#000"><use href="#stroke" stroke-width=".8"/><path fill="none" stroke-width="1.800" d="M470 326C487 317 505 313.500 522 313.500 552 313.500 580 333 608 347.500 636 362.500 658 366 678 366 695 366 712 360 728 353"/><path fill="none" stroke-width="3.500" stroke-linecap="round" d="M540 316C562 322 585 335 608 347.500 636 362.500 658 366 678 366"/></g>
<text x="392" y="430" textLength="49" lengthAdjust="spacingAndGlyphs">Название</text>
<rect x="492" y="414" width="233" height="19" fill="#fff"/><path d="M492 433.500h233" stroke="#2b6a85" stroke-width="2"/>
<rect x="496" y="419" width="27" height="13" fill="#1f6fb5"/><text x="497" y="430" class="w" textLength="26" lengthAdjust="spacingAndGlyphs">4 Pen</text>
<text x="392" y="456" textLength="18" lengthAdjust="spacingAndGlyphs">Тип</text>
<rect x="493.500" y="442.500" width="231" height="18" rx="3" fill="#fff" stroke="#ddd"/><text x="496" y="456" textLength="25" lengthAdjust="spacingAndGlyphs">Перо</text><path d="M713 449h8l-4 5z" fill="#111"/>
<text x="392" y="482" textLength="26" lengthAdjust="spacingAndGlyphs">Blend</text>
<rect x="493.500" y="468.500" width="231" height="18" rx="3" fill="#fff" stroke="#ddd"/><text x="496" y="482" textLength="63" lengthAdjust="spacingAndGlyphs">Нормальный</text><path d="M713 475h8l-4 5z" fill="#111"/>
<text x="392" y="527" textLength="40" lengthAdjust="spacingAndGlyphs">Ширина</text>
<rect x="489.500" y="514.500" width="224" height="15" fill="#fff" stroke="#555"/><rect x="490" y="515" width="16" height="14" fill="#c4dff3"/><path d="M506.500 515v14" stroke="#6a9cc0"/>
<rect x="721" y="513" width="52" height="18" fill="#fff"/><path d="M721 530.500h52" stroke="#aaa"/><text x="724" y="527">4</text><text x="779" y="527">px</text>
<text x="392" y="551" textLength="65" lengthAdjust="spacingAndGlyphs">Мин. ширина</text>
<rect x="492.500" y="538.500" width="232" height="15" fill="#fff" stroke="#444"/><text x="731" y="551" textLength="20" lengthAdjust="spacingAndGlyphs">0 %</text>
<text x="392" y="573" textLength="37" lengthAdjust="spacingAndGlyphs">Opacity</text>
<rect x="492.500" y="560.500" width="232" height="15" fill="url(#blue)" stroke="#456"/><text x="732" y="573" textLength="31" lengthAdjust="spacingAndGlyphs">100 %</text>
<use href="#cbc" x="393" y="584"/><text x="410" y="595" textLength="105" lengthAdjust="spacingAndGlyphs">Размер по давлению</text>
<use href="#cb" x="527" y="584"/><text x="544" y="595" textLength="153" lengthAdjust="spacingAndGlyphs">Непрозрачность по давлению</text>
<use href="#cbd" x="709" y="584"/><text x="726" y="595" class="m" textLength="79" lengthAdjust="spacingAndGlyphs">Размытый край</text>
<rect x="817" y="310" width="402" height="376" fill="#fafafa" stroke="#e8e8e8"/>
<rect x="817" y="290" width="56" height="21" fill="#fafafa"/>
<rect x="873.500" y="292.500" width="138" height="18" fill="#f0f0f0" stroke="#e2e2e2"/><rect x="1011.500" y="292.500" width="62" height="18" fill="#f0f0f0" stroke="#e2e2e2"/><rect x="1073.500" y="292.500" width="97" height="18" fill="#f0f0f0" stroke="#e2e2e2"/>
<text x="828" y="304" textLength="32" lengthAdjust="spacingAndGlyphs">Option</text>
<text x="883" y="305" textLength="116" lengthAdjust="spacingAndGlyphs">Pen Pressure Correction</text>
<text x="1023" y="305" textLength="38" lengthAdjust="spacingAndGlyphs">Texture</text>
<text x="1085" y="305" textLength="75" lengthAdjust="spacingAndGlyphs">Post Processing</text>
<text x="827" y="331" textLength="85" lengthAdjust="spacingAndGlyphs">There is no option</text>
<rect x="818" y="696" width="130" height="20" rx="2" fill="#f6f6f6"/>
<text x="819" y="710" class="g" textLength="127" lengthAdjust="spacingAndGlyphs">Revert to Original Settings</text>
<rect x="1067.500" y="695.500" width="72" height="20" rx="3.500" fill="#fbfdfe" stroke="#27607a"/><text x="1103" y="710" text-anchor="middle">OK</text>
<rect x="1148.500" y="695.500" width="72" height="20" rx="3.500" fill="#fff" stroke="#d6d6d6"/><text x="1183" y="710" text-anchor="middle">Cancel</text>
</svg>
</body></html>
